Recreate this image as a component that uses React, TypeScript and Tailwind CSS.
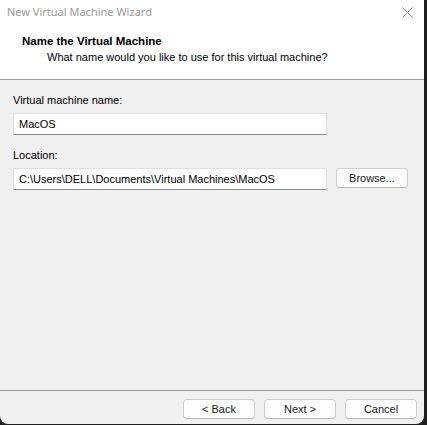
import React from "react";

const font = { fontFamily: "'Liberation Sans', 'Noto Sans', sans-serif" };

const Btn = ({ label, w = "w-[72px]" }: { label: string; w?: string }) => (
  <button
    className={`${w} h-[20px] rounded-[4px] border border-[#cfcfcf] border-b-[#b8b8b8] bg-[#fdfdfd] text-[11px] text-[#1a1a1a] leading-none flex items-center justify-center`}
  >
    {label}
  </button>
);

const Field = ({ value }: { value: string }) => (
  <div className="w-[314px] h-[22px] bg-white border border-[#e0e0e0] border-b-[#8a8a8a] flex items-center pl-[5px] text-[11px] text-black">
    {value}
  </div>
);

export default function App() {
  return (
    <div className="w-[427px] h-[425px] bg-[#1e1e1e] overflow-hidden" style={font}>
      <div className="w-[424px] h-[424px] bg-[#f0f0f0] rounded-b-[8px] flex flex-col overflow-hidden">
        {/* title bar */}
        <div className="h-[24px] bg-white flex items-center justify-between pl-[7px] pr-[11px]">
          <span className="text-[11px] text-[#9a9a9a] font-['Noto_Sans']">New Virtual Machine Wizard</span>
          <svg width="11" height="11" viewBox="0 0 11 11">
            <path d="M0.5 0.5 L10.5 10.5 M10.5 0.5 L0.5 10.5" stroke="#8c8c8c" strokeWidth="1" />
          </svg>
        </div>

        {/* header */}
        <div className="h-[56px] bg-white border-b border-[#a0a0a0] pt-[9px] pl-[22px] text-[11px] leading-[16px] text-black">
          <div className="font-bold text-[11.5px]">Name the Virtual Machine</div>
          <div className="pl-[25px]">What name would you like to use for this virtual machine?</div>
        </div>

        {/* body */}
        <div className="flex-1 flex flex-col px-[13px] pt-[12px] text-[11px] leading-[16px] text-black">
          <div>Virtual machine name:</div>
          <div className="mt-[5px]">
            <Field value="MacOS" />
          </div>
          <div className="mt-[12px]">Location:</div>
          <div className="mt-[5px] flex items-start gap-[9px]">
            <Field value="C:\Users\DELL\Documents\Virtual Machines\MacOS" />
            <Btn label="Browse..." />
          </div>
        </div>

        {/* footer */}
        <div className="h-[34px] border-t border-[#a0a0a0] flex items-start justify-end gap-[9px] pt-[8px] pr-[7px]">
          <Btn label="< Back" />
          <Btn label="Next >" />
          <Btn label="Cancel" />
        </div>
      </div>
    </div>
  );
}
